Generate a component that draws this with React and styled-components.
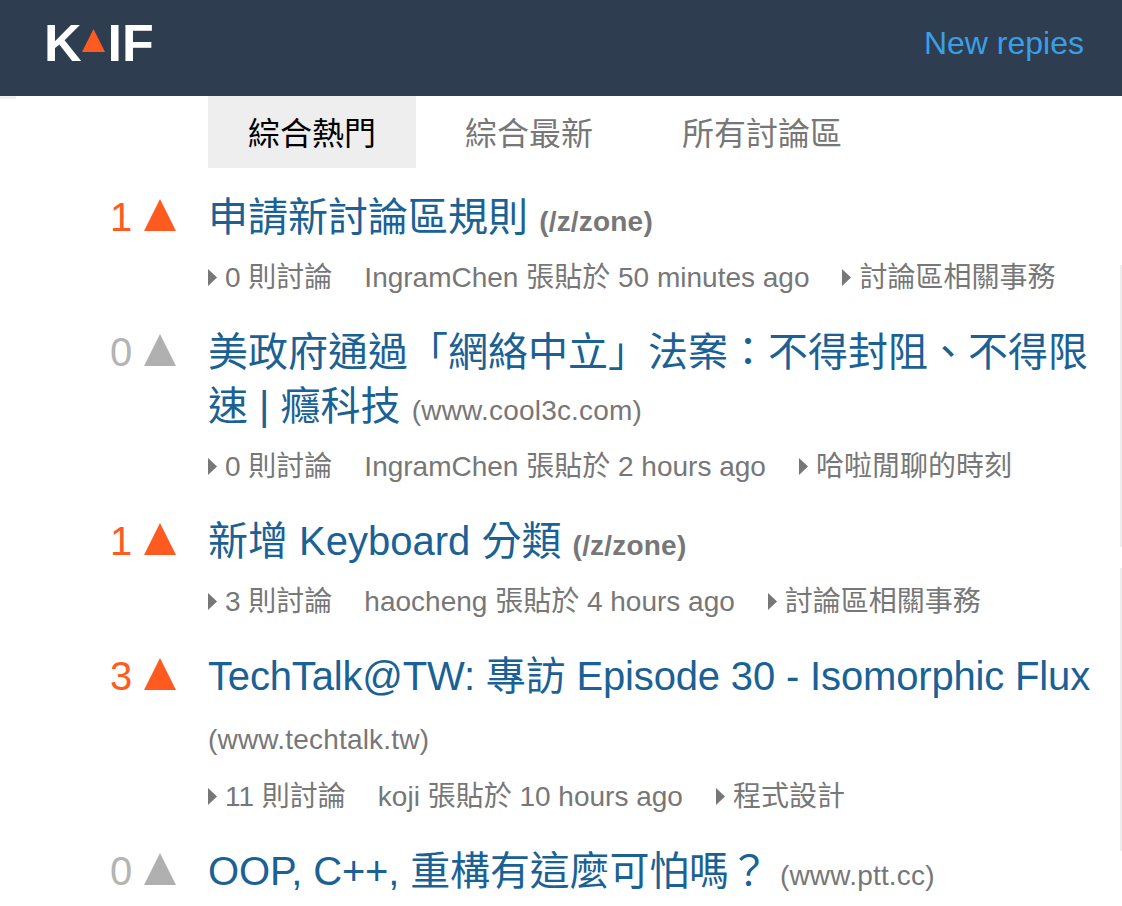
import React from 'react'
import styled, { createGlobalStyle } from 'styled-components'

const GlobalStyle = createGlobalStyle`
  html, body {
    margin: 0;
    padding: 0;
    background: #fff;
    font-family: "Liberation Sans", "Noto Sans CJK TC", sans-serif;
  }
`

const Page = styled.div`
  position: relative;
  width: 1122px;
  height: 906px;
  overflow: hidden;
`

const Header = styled.header`
  position: relative;
  height: 96px;
  box-sizing: border-box;
  background: #2e3d50;
  display: flex;
  align-items: center;
  justify-content: space-between;
  padding: 0 38px 10px 44px;

  &::after {
    content: '';
    position: absolute;
    left: 0;
    top: 96px;
    width: 16px;
    height: 3px;
    background: #f0f0f0;
  }
`

const Logo = styled.a`
  display: flex;
  align-items: center;
  color: #fff;
  font-size: 52px;
  font-weight: 700;
  line-height: 1;
`

const LogoMark = styled.svg`
  width: 23px;
  height: 23px;
  margin: -6px 3px 0 0;
`

const NewReplies = styled.a`
  color: #3b9fe6;
  font-size: 32px;
  line-height: 1;
`

const Tabs = styled.nav`
  display: flex;
  gap: 9px;
  padding-left: 208px;
`

const Tab = styled.a`
  height: 72px;
  box-sizing: border-box;
  padding: 0 40px 3px;
  display: flex;
  align-items: center;
  font-size: 32px;
  color: ${p => (p.$active ? '#000' : '#777')};
  background: ${p => (p.$active ? '#eee' : 'transparent')};
`

const List = styled.ol`
  list-style: none;
  margin: 0;
  padding: 22px 24px 0 110px;
`

const Row = styled.li`
  display: grid;
  grid-template-columns: 98px 1fr;
  margin-bottom: 21px;
`

const Vote = styled.div`
  display: flex;
  align-items: center;
  gap: 12px;
  height: 54px;
  font-size: 40px;
  color: ${p => (p.$on ? '#ff5a1f' : '#b4b4b4')};
`

const VoteCount = styled.span`
  min-width: 22px;
`

const Arrow = styled.svg`
  width: 32px;
  height: 32px;
  margin-bottom: 4px;
  fill: ${p => (p.$on ? '#ff5a1f' : '#b0b0b0')};
`

const Title = styled.h2`
  margin: 0;
  font-weight: 400;
  font-size: 40px;
  line-height: 54px;
`

const TitleLink = styled.a`
  color: #1a6195;
  letter-spacing: ${p => (p.$tight ? '-0.16px' : '0')};
`

const Source = styled.span`
  display: ${p => (p.$block ? 'block' : 'inline')};
  margin-top: ${p => (p.$block ? '14px' : '0')};
  line-height: ${p => (p.$block ? '46px' : '1')};
  font-size: 28px;
  letter-spacing: 0.2px;
  color: #777;
  font-weight: ${p => (p.$zone ? 700 : 400)};
`

const Meta = styled.div`
  display: flex;
  align-items: center;
  height: 54px;
  margin: 4px 0 2px;
  font-size: 28px;
  color: #777;
`

const Caret = styled.svg`
  width: 9px;
  height: 17px;
  margin: 4px 8px 0 0;
  fill: #777;
  flex: none;
`

const Comments = styled.span`
  margin-right: 32px;
`

const Author = styled.span`
  margin-right: 33px;
`

// sidebar panels, only their left edge is still inside the window
const SideEdge = styled.aside`
  position: absolute;
  top: 265px;
  right: 0;
  width: 2px;
  display: flex;
  flex-direction: column;
  gap: 21px;
`

const SidePanel = styled.div`
  height: ${p => p.$height}px;
  background: #eee;
`

const posts = [
  { score: 1, on: true, title: '申請新討論區規則', source: '/z/zone', zone: true, comments: 0, author: 'IngramChen', ago: '50 minutes ago', forum: '討論區相關事務' },
  { score: 0, on: false, title: '美政府通過「網絡中立」法案\uFF1A不得封阻、不得限速 | 癮科技', source: 'www.cool3c.com', comments: 0, author: 'IngramChen', ago: '2 hours ago', forum: '哈啦閒聊的時刻' },
  { score: 1, on: true, title: '新增 Keyboard 分類', source: '/z/zone', zone: true, comments: 3, author: 'haocheng', ago: '4 hours ago', forum: '討論區相關事務' },
  { score: 3, on: true, title: 'TechTalk@TW: 專訪 Episode 30 - Isomorphic Flux', tight: true, source: 'www.techtalk.tw', block: true, comments: 11, author: 'koji', ago: '10 hours ago', forum: '程式設計' },
  { score: 0, on: false, title: 'OOP, C++, 重構有這麼可怕嗎\uFF1F', tight: true, source: 'www.ptt.cc' },
]

function App() {
  return (
    <Page>
      <GlobalStyle />
      <Header>
        <Logo>
          K
          <LogoMark viewBox="0 0 23 23"><path d="M11.5 0L23 23H0z" fill="#ff5a1f" /></LogoMark>
          IF
        </Logo>
        <NewReplies>New repies</NewReplies>
      </Header>
      <Tabs>
        <Tab $active>綜合熱門</Tab>
        <Tab>綜合最新</Tab>
        <Tab>所有討論區</Tab>
      </Tabs>
      <List>
        {posts.map(post => (
          <Row key={post.title}>
            <Vote $on={post.on}>
              <VoteCount>{post.score}</VoteCount>
              <Arrow $on={post.on} viewBox="0 0 32 32"><path d="M16 0L32 32H0z" /></Arrow>
            </Vote>
            <div>
              <Title>
                <TitleLink $tight={post.tight}>{post.title}</TitleLink>{' '}
                <Source $zone={post.zone} $block={post.block}>({post.source})</Source>
              </Title>
              {post.author && (
                <Meta>
                  <Caret viewBox="0 0 9 17"><path d="M0 0L9 8.5L0 17z" /></Caret>
                  <Comments>{post.comments} 則討論</Comments>
                  <Author>{post.author} 張貼於 {post.ago}</Author>
                  <Caret viewBox="0 0 9 17"><path d="M0 0L9 8.5L0 17z" /></Caret>
                  {post.forum}
                </Meta>
              )}
            </div>
          </Row>
        ))}
      </List>
      <SideEdge>
        <SidePanel $height={282} />
        <SidePanel $height={283} />
      </SideEdge>
    </Page>
  )
}

export default App
